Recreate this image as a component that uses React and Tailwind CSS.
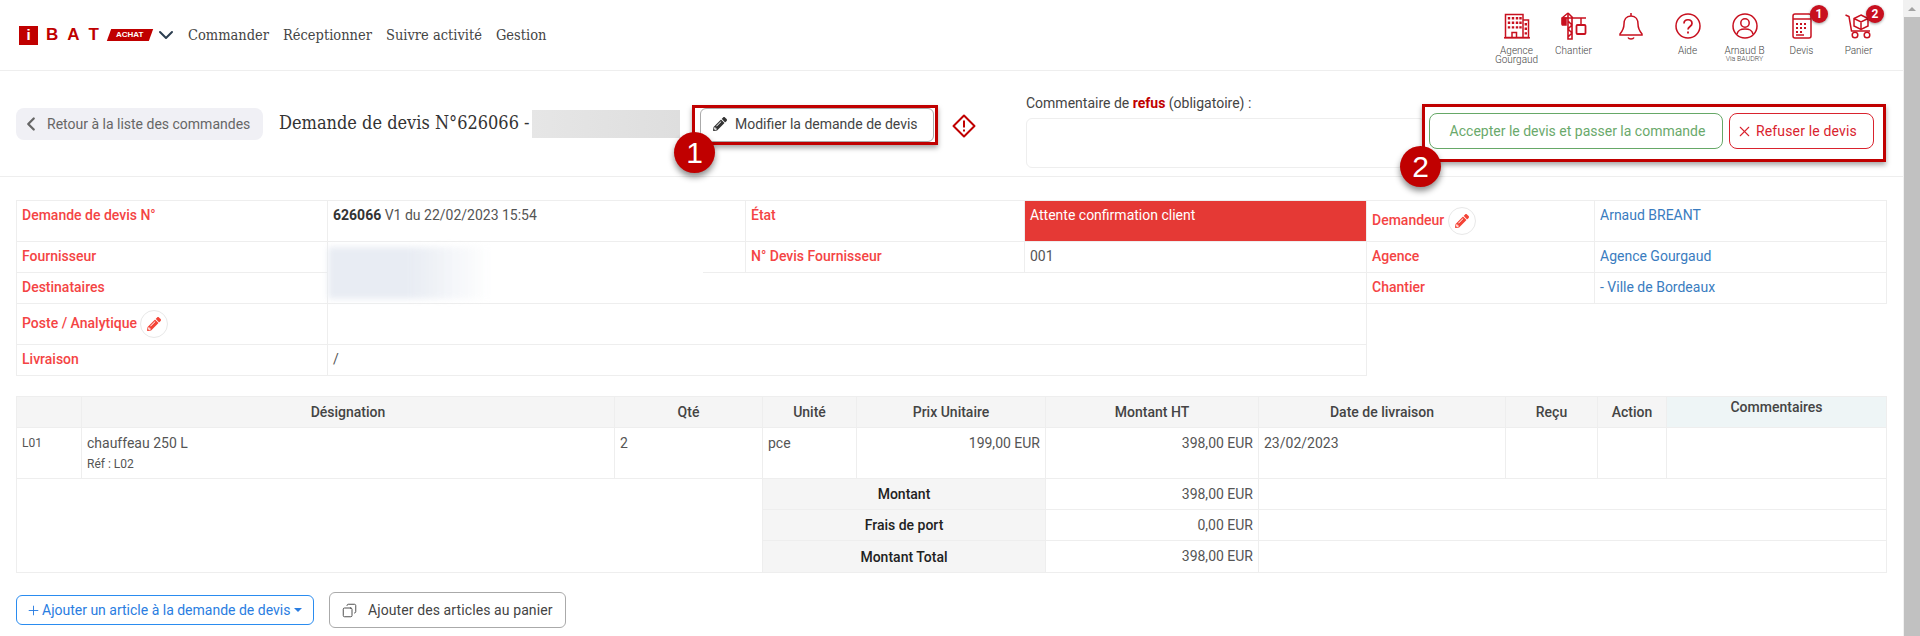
import React from "react";
import { ChevronLeft, ChevronDown, X, Plus, Copy } from "lucide-react";
import { FaPencilAlt } from "react-icons/fa";

const slab = "[font-family:'DejaVu_Serif_Condensed','DejaVu_Serif',serif]";

const IconBuilding = () => (
  <svg width="26" height="26" viewBox="0 0 26 26" fill="none" stroke="#c8101f" strokeWidth="1.5">
    <path d="M1.5 24.5V1.5H19V24.5H1.5ZM19 7H24.5V24.5H19" />
    <path d="M8 24.5V19.5H12.5V24.5" />
    <path d="M0 24.8H26" />
    <path strokeWidth="2.4" strokeDasharray="2.4 2.2" d="M5 4V17M9 4V17M13 4V17M16.5 4V17M21.8 10V22" />
  </svg>
);

const IconCrane = () => (
  <svg width="26" height="28" viewBox="0 0 26 28" fill="none" stroke="#c8101f" strokeWidth="1.5">
    <path d="M1 6H25M7 1L1 6V12H5M7 1L12 6" />
    <path d="M7 1V27H11V6M7 9L11 13L7 17L11 21L7 25" strokeWidth="1.6" />
    <path d="M1.5 6H5V13H1.5Z" fill="#c8101f" />
    <path d="M20 6V13" />
    <rect x="15.5" y="13" width="9" height="9" rx="1" strokeWidth="1.8" />
  </svg>
);

const IconBell = () => (
  <svg width="24" height="28" viewBox="0 0 24 28" fill="none" stroke="#c8101f" strokeWidth="1.5">
    <path d="M12 1V4M12 4C7 4 5 8 5 12C5 17 3.5 19 1 22V23H23V22C20.5 19 19 17 19 12C19 8 17 4 12 4Z" />
    <path d="M9 25.5C10 27.5 14 27.5 15 25.5" />
  </svg>
);

const IconHelp = () => (
  <svg width="26" height="26" viewBox="0 0 26 26" fill="none" stroke="#c8101f" strokeWidth="1.5">
    <circle cx="13" cy="13" r="12" />
    <path d="M9 10.5C9 5.5 17 5.5 17 10.5C17 13.5 13 13.5 13 16.5" strokeWidth="1.7" />
    <path d="M13 18.5V20.5" strokeWidth="1.8" />
  </svg>
);

const IconUser = () => (
  <svg width="26" height="26" viewBox="0 0 26 26" fill="none" stroke="#c8101f" strokeWidth="1.5">
    <circle cx="13" cy="13" r="12" />
    <circle cx="13" cy="10" r="4.2" />
    <path d="M5 21C6 16.5 9 16 13 16C17 16 20 16.5 21 21" />
  </svg>
);

const IconCalc = () => (
  <svg width="20" height="26" viewBox="0 0 20 26" fill="none" stroke="#c8101f" strokeWidth="1.5">
    <rect x="1" y="1" width="18" height="24" rx="2" />
    <path d="M1 6H19" />
    <path strokeWidth="2" strokeDasharray="2 2" d="M4 11H16M4 15H16M4 19H10" />
    <path d="M4 22H12" />
  </svg>
);

const IconCart = () => (
  <svg width="27" height="26" viewBox="0 0 27 26" fill="none" stroke="#c8101f" strokeWidth="1.5">
    <path d="M0.5 2L4 3.5L6.5 18H25" />
    <circle cx="10" cy="22" r="2.8" />
    <circle cx="22" cy="22" r="2.8" />
    <path d="M16 2L23 5.5V13L16 16.5L9 13V5.5L16 2ZM9 5.5L16 9L23 5.5M16 9V16.5" />
  </svg>
);

const topItems = [
  { icon: <IconBuilding />, label: "Agence", sub: "Gourgaud" },
  { icon: <IconCrane />, label: "Chantier" },
  { icon: <IconBell />, label: "" },
  { icon: <IconHelp />, label: "Aide" },
  { icon: <IconUser />, label: "Arnaud B", small: "Via BAUDRY" },
  { icon: <IconCalc />, label: "Devis", badge: "1", dx: "left-[37px]" },
  { icon: <IconCart />, label: "Panier", badge: "2", dx: "left-[36px]" },
];

const Th = ({ children, className = "" }) => (
  <th className={"border border-[#eeeeee] bg-[#f5f5f5] text-center font-medium text-[#444] px-[5px] " + className}>{children}</th>
);
const Td = ({ children, className = "", ...rest }) => (
  <td {...rest} className={"border border-[#eeeeee] px-[5px] align-top pt-[4px] " + className}>{children}</td>
);
const Label = ({ children, className = "", ...rest }) => (
  <td {...rest} className={"border border-[#eeeeee] px-[5px] align-top pt-[4px] font-medium text-[#f44444] " + className}>{children}</td>
);

const EditBtn = () => (
  <span className="inline-flex w-[28px] h-[28px] rounded-full border border-[#e8e8e8] items-center justify-center align-middle">
    <FaPencilAlt className="text-[#f44336] text-[14px]" />
  </span>
);

const Annot = ({ n, className }) => (
  <div className={"absolute w-[41px] h-[41px] rounded-full bg-[#c00000] text-white flex items-center justify-center text-[30px] [font-family:'Liberation_Sans',sans-serif] shadow-[0_4px_6px_rgba(0,0,0,0.45)] " + className}>
    {n}
  </div>
);

export default function App() {
  return (
    <div className="flex h-[636px] w-full overflow-hidden bg-white text-[14px] leading-5 text-[#555] font-normal [font-family:Roboto,sans-serif]">
      <div className="relative flex-1 min-w-0">
        {/* Top bar */}
        <header className="h-[71px] border-b border-[#eeeeee] flex items-start">
          <div className="flex items-center h-[70px] pl-[19px]">
            <span className="w-[19px] h-[19px] bg-[#c00000] text-white flex items-center justify-center font-bold text-[15px] [font-family:'Liberation_Sans',sans-serif]">i</span>
            <span className="ml-[8px] flex gap-[9px] text-[#c00000] text-[17px] font-black [font-family:'Liberation_Sans',sans-serif]">
              <span>B</span><span>A</span><span>T</span>
            </span>
            <span className="ml-[10px] w-[42px] h-[12px] bg-[#c00000] text-white text-[8px] leading-3 font-bold text-center -skew-x-[20deg] [font-family:'Liberation_Sans',sans-serif]">
              <span className="inline-block skew-x-[20deg]">ACHAT</span>
            </span>
            <ChevronDown size={24} strokeWidth={2} className="ml-[3px] text-[#2c3e50]" />
            <nav className={"flex gap-[14px] ml-[10px] font-normal text-[#444] text-[14.5px] " + slab}>
              <span>Commander</span>
              <span>Réceptionner</span>
              <span>Suivre activité</span>
              <span>Gestion</span>
            </nav>
          </div>
          <div className="ml-auto flex pr-[16px] pt-[12px]">
            {topItems.map((it, i) => (
              <div key={i} className="relative w-[57px] flex flex-col items-center">
                <div className="h-[28px] flex items-center justify-center">{it.icon}</div>
                {it.badge && (
                  <span className={"absolute -top-[7px] w-[18px] h-[18px] rounded-full bg-[#c8101f] text-white text-[12px] font-bold flex items-center justify-center shadow-[0_1px_3px_rgba(0,0,0,0.4)] " + it.dx}>
                    {it.badge}
                  </span>
                )}
                <div className="mt-[6px] text-[10px] leading-[9px] font-light text-[#444] text-center whitespace-nowrap">
                  {it.label}
                  {it.sub && <div>{it.sub}</div>}
                  {it.small && <div className="text-[7px]">{it.small}</div>}
                </div>
              </div>
            ))}
          </div>
        </header>

        {/* Action bar */}
        <div className="h-[106px] border-b border-[#eeeeee] flex items-start pl-[16px]">
          <button className="mt-[37px] w-[247px] h-[32px] pb-[1px] rounded-[8px] bg-[#f0f0f5] flex items-center text-[#666]">
            <ChevronLeft size={22} strokeWidth={2.5} className="ml-[4px] mr-[5px]" />
            Retour à la liste des commandes
          </button>
          <h1 className={"mt-[41px] ml-[16px] w-[253px] whitespace-nowrap text-[18px] leading-[22px] text-[#333] font-normal " + slab}>Demande de devis N°626066 -</h1>
          <div className="mt-[39px] w-[148px] h-[28px] bg-gradient-to-r from-[#e6e6e6] to-[#dedede]"></div>
          <button className="mt-[37px] ml-[20px] w-[234px] h-[34px] pb-[2px] border border-[#aaa] rounded-[6px] flex items-center pl-[12px] text-[#444]">
            <FaPencilAlt className="text-[14px] text-[#333] mr-[8px]" />
            Modifier la demande de devis
          </button>
          <svg className="mt-[43px] ml-[18px]" width="24" height="24" viewBox="0 0 24 24" fill="none">
            <path d="M12 1.5L22.5 12L12 22.5L1.5 12Z" stroke="#c00000" strokeWidth="2" strokeLinejoin="round" />
            <path d="M12 6.5V13.5M12 15.5V17.5" stroke="#c00000" strokeWidth="2" />
          </svg>
          <div className="ml-[50px] mt-[22px] w-[399px]">
            <div className="text-[#444]">
              Commentaire de <b className="text-[#c00000] font-bold">refus</b> (obligatoire) :
            </div>
            <textarea className="mt-[5px] block w-full h-[50px] border border-[#eeeeee] rounded-[6px] resize-none"></textarea>
          </div>
          <div className="flex gap-[6px] ml-[4px] mt-[42px]">
            <button className="w-[294px] h-[36px] pl-[3px] border border-[#66a867] rounded-[8px] text-[#6aa96b] bg-white">Accepter le devis et passer la commande</button>
            <button className="w-[145px] h-[36px] pl-[6px] border border-[#d9232e] rounded-[8px] text-[#d9232e] bg-white flex items-center gap-[3px] tracking-[0.15px]">
              <X size={17} strokeWidth={1.5} />
              Refuser le devis
            </button>
          </div>
        </div>

        {/* Info table */}
        <table className="ml-[16px] mt-[23px] w-[1870px] table-fixed border-collapse">
          <colgroup>
            <col className="w-[311px]" />
            <col className="w-[418px]" />
            <col className="w-[279px]" />
            <col className="w-[342px]" />
            <col className="w-[228px]" />
            <col className="w-[292px]" />
          </colgroup>
          <tbody>
            <tr className="h-[41px]">
              <Label>Demande de devis N°</Label>
              <Td><b className="font-bold text-[#333]">626066</b> V1 du 22/02/2023 15:54</Td>
              <Label>État</Label>
              <Td className="bg-[#e53935] text-white">Attente confirmation client</Td>
              <Label className="!pt-0 !align-middle">Demandeur <EditBtn /></Label>
              <Td className="text-[#3a7cc0]">Arnaud BREANT</Td>
            </tr>
            <tr className="h-[31px]">
              <Label>Fournisseur</Label>
              <Td className="relative">
                {/* masked supplier name */}
                <div className="absolute left-0 top-[5px] w-[375px] h-[52px] bg-white">
                  <div className="w-[163px] h-full blur-[3px] bg-gradient-to-r from-[#e8ecf3] via-[#e8ecf3] to-transparent"></div>
                </div>
              </Td>
              <Label>N° Devis Fournisseur</Label>
              <Td>001</Td>
              <Label>Agence</Label>
              <Td className="text-[#3a7cc0]">Agence Gourgaud</Td>
            </tr>
            <tr className="h-[31px]">
              <Label>Destinataires</Label>
              <Td colSpan={3}></Td>
              <Label>Chantier</Label>
              <Td className="text-[#3a7cc0]">- Ville de Bordeaux</Td>
            </tr>
            <tr className="h-[41px]">
              <Label className="!pt-0 !align-middle">Poste / Analytique <EditBtn /></Label>
              <Td colSpan={3}></Td>
            </tr>
            <tr className="h-[31px]">
              <Label>Livraison</Label>
              <Td colSpan={3}>/</Td>
            </tr>
          </tbody>
        </table>

        {/* Lines table */}
        <table className="ml-[16px] mt-[20px] w-[1870px] table-fixed border-collapse [&_td]:pt-[5px]">
          <colgroup>
            <col className="w-[65px]" />
            <col className="w-[533px]" />
            <col className="w-[148px]" />
            <col className="w-[94px]" />
            <col className="w-[189px]" />
            <col className="w-[213px]" />
            <col className="w-[247px]" />
            <col className="w-[92px]" />
            <col className="w-[69px]" />
            <col className="w-[220px]" />
          </colgroup>
          <thead>
            <tr className="h-[31px]">
              <Th></Th>
              <Th>Désignation</Th>
              <Th>Qté</Th>
              <Th>Unité</Th>
              <Th>Prix Unitaire</Th>
              <Th>Montant HT</Th>
              <Th>Date de livraison</Th>
              <Th>Reçu</Th>
              <Th>Action</Th>
              <Th className="!bg-[#eef5f6] !align-top">Commentaires</Th>
            </tr>
          </thead>
          <tbody>
            <tr className="h-[51px]">
              <Td className="text-[12px]">L01</Td>
              <Td>
                chauffeau 250 L
                <div className="text-[12px] mt-[1px]">Réf : L02</div>
              </Td>
              <Td>2</Td>
              <Td>pce</Td>
              <Td className="text-right">199,00 EUR</Td>
              <Td className="text-right">398,00 EUR</Td>
              <Td>23/02/2023</Td>
              <Td></Td>
              <Td></Td>
              <Td></Td>
            </tr>
            <tr className="h-[31px]">
              <Td colSpan={3} rowSpan={3}></Td>
              <th colSpan={2} className="border border-[#eeeeee] bg-[#f5f5f5] font-medium text-[#222]">Montant</th>
              <Td className="text-right">398,00 EUR</Td>
              <Td colSpan={4}></Td>
            </tr>
            <tr className="h-[31px]">
              <th colSpan={2} className="border border-[#eeeeee] bg-[#f5f5f5] font-medium text-[#222]">Frais de port</th>
              <Td className="text-right">0,00 EUR</Td>
              <Td colSpan={4}></Td>
            </tr>
            <tr className="h-[32px]">
              <th colSpan={2} className="border border-[#eeeeee] bg-[#f5f5f5] font-medium text-[#222]">Montant Total</th>
              <Td className="text-right">398,00 EUR</Td>
              <Td colSpan={4}></Td>
            </tr>
          </tbody>
        </table>

        {/* Bottom buttons */}
        <div className="flex items-center gap-[15px] ml-[16px] mt-[19px]">
          <button className="w-[298px] h-[30px] border border-[#2a8cf0] rounded-[6px] text-[#2a7de1] flex items-center pl-[9px] whitespace-nowrap">
            <Plus size={15} strokeWidth={1.5} className="mr-[1px]" />
            Ajouter un article à la demande de devis
            <span className="ml-[4px] w-0 h-0 border-x-[4px] border-x-transparent border-t-[4px] border-t-[#2a7de1]"></span>
          </button>
          <button className="w-[237px] h-[36px] border border-[#aaa] rounded-[6px] text-[#444] flex items-center pl-[12px] tracking-[0.1px]">
            <Copy size={15} strokeWidth={1.5} className="mr-[11px] -scale-x-100" />
            Ajouter des articles au panier
          </button>
        </div>

        {/* Annotations over the screenshot */}
        <div className="absolute left-[692px] top-[105px] w-[246px] h-[40px] border-[3px] border-[#c00000] shadow-[0_3px_5px_rgba(0,0,0,0.35)]"></div>
        <Annot n="1" className="left-[674px] top-[132px]" />
        <div className="absolute left-[1422px] top-[104px] w-[464px] h-[58px] border-[3px] border-[#c00000] shadow-[0_3px_5px_rgba(0,0,0,0.35)]"></div>
        <Annot n="2" className="left-[1400px] top-[146px]" />
      </div>

      {/* Scrollbar */}
      <div className="w-[17px] shrink-0 bg-[#f1f1f1] flex flex-col">
        <div className="h-[17px] flex items-center justify-center">
          <span className="w-0 h-0 border-x-[4px] border-x-transparent border-b-[4px] border-b-[#a3a3a3]"></span>
        </div>
        <div className="flex-1 ml-[1px] bg-[#c1c1c1]"></div>
      </div>
    </div>
  );
}
